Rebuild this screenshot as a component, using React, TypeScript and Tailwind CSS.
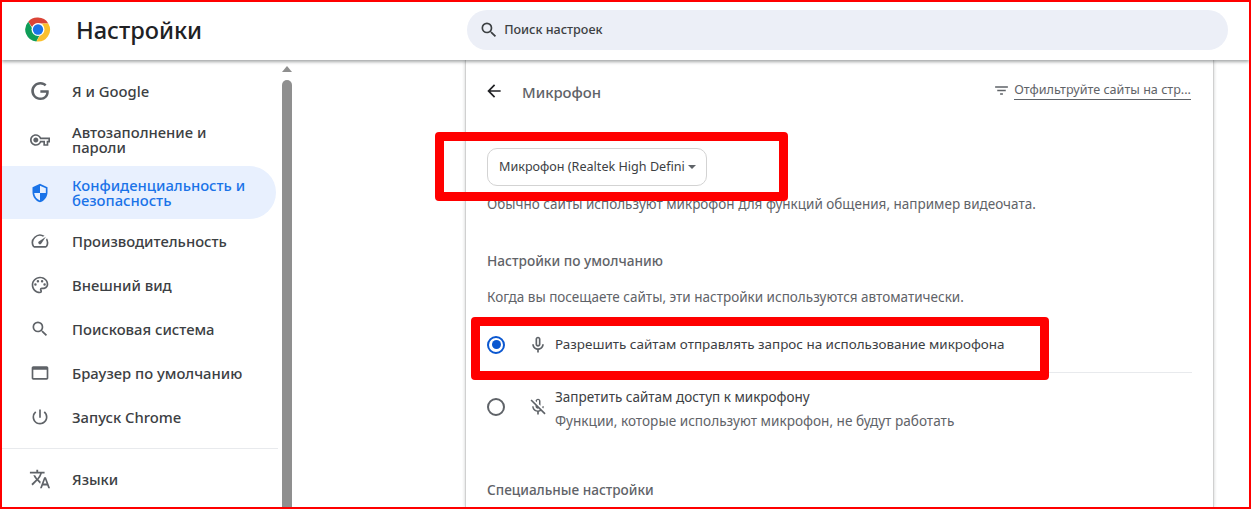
import React from "react";

const paths = {
  google:
    "M12.48 10.92v3.28h7.84c-.24 1.84-.853 3.187-1.787 4.133-1.147 1.147-2.933 2.4-6.053 2.4-4.827 0-8.6-3.893-8.6-8.72s3.773-8.72 8.6-8.72c2.6 0 4.507 1.027 5.907 2.347l2.307-2.307C18.747 1.44 16.133 0 12.48 0 5.867 0 .307 5.387.307 12s5.56 12 12.173 12c3.573 0 6.267-1.173 8.373-3.36 2.16-2.16 2.84-5.213 2.84-7.667 0-.76-.053-1.467-.173-2.053H12.48z",
  key: "M22 19h-6v-4h-2.68c-1.14 2.42-3.6 4-6.32 4-3.86 0-7-3.14-7-7s3.14-7 7-7c2.72 0 5.17 1.58 6.32 4H24v6h-2v4zm-4-2h2v-4h2v-2H11.94l-.23-.67C11.01 8.34 9.11 7 7 7c-2.76 0-5 2.24-5 5s2.24 5 5 5c2.11 0 4.01-1.34 4.71-3.33l.23-.67H18v4zM7 15c-1.65 0-3-1.35-3-3s1.35-3 3-3 3 1.35 3 3-1.35 3-3 3z",
  shield:
    "M12 1L3 5v6c0 5.55 3.84 10.74 9 12 5.16-1.26 9-6.45 9-12V5l-9-4zm0 10.99h7c-.53 4.12-3.28 7.79-7 8.94V12H5V6.3l7-3.11v8.8z",
  speed:
    "M20.38 8.57l-1.23 1.85a8 8 0 0 1-.22 7.58H5.07A8 8 0 0 1 15.58 6.85l1.85-1.23A10 10 0 0 0 3.35 19a2 2 0 0 0 1.72 1h13.85a2 2 0 0 0 1.74-1 10 10 0 0 0-.27-10.44zm-9.79 6.84a2 2 0 0 0 2.83 0l5.66-8.49-8.49 5.66a2 2 0 0 0 0 2.83z",
  palette:
    "M12 22C6.49 22 2 17.51 2 12S6.49 2 12 2s10 4.04 10 9c0 3.31-2.69 6-6 6h-1.77c-.28 0-.5.22-.5.5 0 .12.05.23.13.33.41.47.64 1.06.64 1.67A2.5 2.5 0 0 1 12 22zm0-18c-4.41 0-8 3.59-8 8s3.59 8 8 8c.28 0 .5-.22.5-.5a.54.54 0 0 0-.14-.35c-.41-.46-.63-1.05-.63-1.65a2.5 2.5 0 0 1 2.5-2.5H16c2.21 0 4-1.79 4-4 0-3.86-3.59-7-8-7zM6.5 10a1.5 1.5 0 1 1 0 3 1.5 1.5 0 0 1 0-3zm3-4a1.5 1.5 0 1 1 0 3 1.5 1.5 0 0 1 0-3zm5 0a1.5 1.5 0 1 1 0 3 1.5 1.5 0 0 1 0-3zm3 4a1.5 1.5 0 1 1 0 3 1.5 1.5 0 0 1 0-3z",
  search:
    "M15.5 14h-.79l-.28-.27A6.471 6.471 0 0 0 16 9.5 6.5 6.5 0 1 0 9.5 16c1.61 0 3.09-.59 4.23-1.57l.27.28v.79l5 4.99L20.49 19l-4.99-5zm-6 0C7.01 14 5 11.99 5 9.5S7.01 5 9.5 5 14 7.01 14 9.5 11.99 14 9.5 14z",
  browser:
    "M20 4H4c-1.11 0-2 .9-2 2v12c0 1.1.89 2 2 2h16c1.1 0 2-.9 2-2V6c0-1.1-.89-2-2-2zm0 14H4V8h16v10z",
  power:
    "M13 3h-2v10h2V3zm4.83 2.17l-1.42 1.42A6.92 6.92 0 0 1 19 12c0 3.87-3.13 7-7 7A6.995 6.995 0 0 1 7.58 6.58L6.17 5.17A8.932 8.932 0 0 0 3 12c0 4.97 4.03 9 9 9s9-4.03 9-9c0-2.74-1.23-5.18-3.17-6.83z",
  translate:
    "M12.87 15.07l-2.54-2.51.03-.03A17.52 17.52 0 0 0 14.07 6H17V4h-7V2H8v2H1v1.99h11.17C11.5 7.92 10.44 9.75 9 11.35 8.07 10.32 7.3 9.19 6.69 8h-2c.73 1.63 1.73 3.17 2.98 4.56l-5.09 5.02L4 19l5-5 3.11 3.11.76-2.04zM18.5 10h-2L12 22h2l1.12-3h4.75L21 22h2l-4.5-12zm-2.62 7l1.62-4.33L19.12 17h-3.24z",
  mic: "M12 14c1.66 0 3-1.34 3-3V5c0-1.66-1.34-3-3-3S9 3.34 9 5v6c0 1.66 1.34 3 3 3zm-1-9c0-.55.45-1 1-1s1 .45 1 1v6c0 .55-.45 1-1 1s-1-.45-1-1V5zm6 6c0 2.76-2.24 5-5 5s-5-2.24-5-5H5c0 3.53 2.61 6.43 6 6.92V21h2v-3.08c3.39-.49 6-3.39 6-6.92h-2z",
  micOff:
    "M10.8 4.9c0-.66.54-1.2 1.2-1.2s1.2.54 1.2 1.2l-.01 3.91L15 10.6V5c0-1.66-1.34-3-3-3-1.54 0-2.79 1.16-2.96 2.65l1.76 1.76V4.9zM19 11h-1.7c0 .58-.1 1.13-.27 1.64l1.27 1.27c.44-.88.7-1.87.7-2.91zM4.41 2.86L3 4.27l6 6V11c0 1.66 1.34 3 3 3 .23 0 .44-.03.65-.08l1.66 1.66c-.71.33-1.5.52-2.31.52-2.76 0-5.3-2.1-5.3-5.1H5c0 3.41 2.72 6.23 6 6.72V21h2v-3.28c.91-.13 1.77-.45 2.55-.9l4.2 4.2 1.41-1.41L4.41 2.86z",
  filter: "M10 18h4v-2h-4v2zM3 6v2h18V6H3zm3 7h12v-2H6v2z",
  back: "M20 11H7.83l5.59-5.59L12 4l-8 8 8 8 1.41-1.41L7.83 13H20v-2z",
};

const Icon: React.FC<{ d: string; className?: string }> = ({ d, className }) => (
  <svg viewBox="0 0 24 24" fill="currentColor" className={className}>
    <path d={d} />
  </svg>
);

const ChromeLogo = () => (
  <svg viewBox="0 0 48 48" className="h-[27px] w-[27px]">
    <path fill="#db4437" d="M24 2a22 22 0 0 1 19 11H24a11 11 0 0 0-10.4 7.4L6 9.5A22 22 0 0 1 24 2z" />
    <path fill="#0f9d58" d="M6 9.5l9.5 16.5a11 11 0 0 0 11.9 7.5L21 46A22 22 0 0 1 6 9.5z" />
    <path fill="#fbc02d" d="M43 13a22 22 0 0 1-22 33l9.5-16.5A11 11 0 0 0 31 13h12z" />
    <circle cx="24" cy="24" r="12" fill="#fff" />
    <circle cx="24" cy="24" r="9.5" fill="#1a73e8" />
  </svg>
);

interface NavItem {
  label: string;
  icon: string;
  h: string;
  iconClass: string;
  active?: boolean;
}

const topItems: NavItem[] = [
  { label: "Я и Google", icon: paths.google, h: "h-11", iconClass: "h-[18px] w-[18px]" },
  { label: "Автозаполнение и пароли", icon: paths.key, h: "h-[53px]", iconClass: "h-5 w-5" },
  { label: "Конфиденциальность и безопасность", icon: paths.shield, h: "h-[53px]", iconClass: "h-5 w-5 -scale-x-100", active: true },
  { label: "Производительность", icon: paths.speed, h: "h-11", iconClass: "h-5 w-5" },
  { label: "Внешний вид", icon: paths.palette, h: "h-11", iconClass: "h-5 w-5" },
  { label: "Поисковая система", icon: paths.search, h: "h-11", iconClass: "h-5 w-5" },
  { label: "Браузер по умолчанию", icon: paths.browser, h: "h-11", iconClass: "h-5 w-5" },
  { label: "Запуск Chrome", icon: paths.power, h: "h-11", iconClass: "h-5 w-5" },
];

const NavRow: React.FC<{ item: NavItem }> = ({ item }) => (
  <div
    className={`${item.h} flex items-center rounded-r-[27px] pl-[25px] ${
      item.active ? "bg-[#e8f0fe] text-[#1a73e8]" : "text-[#3c4043]"
    }`}
  >
    <div className={`flex w-[25px] shrink-0 justify-center ${item.active ? "text-[#1a73e8]" : "text-[#5f6368]"}`}>
      <Icon d={item.icon} className={item.iconClass} />
    </div>
    <span className="ml-[20px] max-w-[185px] text-[14.8px] leading-[15px] font-medium">{item.label}</span>
  </div>
);

const Sidebar = () => (
  <div className="flex w-[291px] shrink-0">
    <nav className="w-[274px] shrink-0 pt-[9px]">
      {topItems.map((item) => (
        <NavRow key={item.label} item={item} />
      ))}
      <div className="mt-[9px] mb-[8px] mr-[-2px] border-t border-[#e8eaed]" />
      <NavRow item={{ label: "Языки", icon: paths.translate, h: "h-11", iconClass: "h-[22px] w-[22px]" }} />
    </nav>
    <div className="ml-[6px] flex w-[10px] flex-col items-center pt-[6px]">
      <div className="h-0 w-0 border-x-[5px] border-b-[6px] border-x-transparent border-b-[#8f8f8f]" />
      <div className="mt-[8px] w-full flex-1 rounded-t-[5px] bg-[#8f8f8f]" />
    </div>
  </div>
);

const Radio: React.FC<{ checked?: boolean; className?: string }> = ({ checked, className = "" }) => (
  <div
    className={`flex h-[18px] w-[18px] shrink-0 items-center justify-center rounded-full border-2 ${
      checked ? "border-[#0b57d0]" : "border-[#5f6368]"
    } ${className}`}
  >
    {checked && <div className="h-[9px] w-[9px] rounded-full bg-[#0b57d0]" />}
  </div>
);

const Card = () => (
  <div className="ml-[172px] w-[749px] shrink-0 border-x border-[#d0d0d0] bg-white shadow-[0_0_3px_rgba(60,64,67,0.25)]">
    <div className="flex h-[62px] items-center pr-[22px] pl-[18px]">
      <Icon d={paths.back} className="h-[20px] w-[20px] text-[#202124]" />
      <h2 className="mt-[2px] ml-[18px] text-[14.9px] font-medium text-[#5f6368]">Микрофон</h2>
      <div className="mb-[2px] ml-auto flex items-center text-[#5f6368]">
        <Icon d={paths.filter} className="h-[17px] w-[17px]" />
        <span className="ml-[4px] border-b border-[#5f6368] text-[12.6px] leading-[18px]">Отфильтруйте сайты на стр...</span>
      </div>
    </div>
    <div className="px-[21px] pt-[26px]">
      <div className="flex h-[38px] w-[220px] items-center rounded-[10px] border border-[#d3d3d3] pl-[11px] text-[12.6px] text-[#3c4043]">
        <span>Микрофон (Realtek High Defini</span>
        <div className="ml-[3px] h-0 w-0 border-x-[4px] border-t-[4px] border-x-transparent border-t-[#5f6368]" />
      </div>
      <p className="mt-[9px] text-[13.5px] leading-[18px] text-[#5f6368]">
        Обычно сайты используют микрофон для функций общения, например видеочата.
      </p>
      <h3 className="mt-[39px] text-[13.7px] leading-[18px] font-medium text-[#5f6368]">Настройки по умолчанию</h3>
      <p className="mt-[18px] text-[13.5px] leading-[18px] text-[#5f6368]">
        Когда вы посещаете сайты, эти настройки используются автоматически.
      </p>
      <div className="mt-[11px] flex h-[56px] items-center border-b border-[#e8eaed]">
        <Radio checked />
        <Icon d={paths.mic} className="ml-[23px] h-5 w-5 text-[#5f6368]" />
        <span className="ml-[7px] text-[13.45px] text-[#3c4043]">
          Разрешить сайтам отправлять запрос на использование микрофона
        </span>
      </div>
      <div className="mt-[13px] flex items-center">
        <Radio className="mb-[4px]" />
        <Icon d={paths.micOff} className="mb-[4px] ml-[23px] h-5 w-5 text-[#5f6368]" />
        <div className="ml-[7px] leading-[23px]">
          <div className="text-[13.5px] text-[#3c4043]">Запретить сайтам доступ к микрофону</div>
          <div className="text-[13.6px] text-[#5f6368]">Функции, которые используют микрофон, не будут работать</div>
        </div>
      </div>
      <h3 className="mt-[49px] text-[13.6px] leading-[18px] font-medium text-[#5f6368]">Специальные настройки</h3>
    </div>
  </div>
);

export default function App() {
  return (
    <div
      className="relative box-border flex h-[509px] w-[1251px] flex-col overflow-hidden border-2 border-[#ff0000] bg-white"
      style={{ fontFamily: '"Noto Sans", sans-serif' }}
    >
      <header className="relative z-10 flex h-[58px] shrink-0 items-center bg-white pb-[2px] shadow-[0_2px_3px_rgba(60,64,67,0.45)]">
        <div className="mb-[1px] ml-[23px] flex w-[26px] justify-center">
          <ChromeLogo />
        </div>
        <h1 className="mt-[2px] ml-[25px] text-[23.6px] font-medium text-[#202124]">Настройки</h1>
        <div className="ml-[265px] flex h-10 w-[761px] items-center rounded-[20px] bg-[#eceff7] pl-[12px] text-[#3c4043]">
          <Icon d={paths.search} className="h-[20px] w-[20px]" />
          <span className="ml-[5px] text-[12.6px] font-medium">Поиск настроек</span>
        </div>
      </header>
      <div className="flex min-h-0 flex-1">
        <Sidebar />
        <Card />
      </div>
      {/* red annotation boxes drawn over the page */}
      <div className="absolute top-[130px] left-[433px] h-[69px] w-[353px] rounded-[4px] border-[9px] border-[#ff0000]" />
      <div className="absolute top-[315px] left-[469px] h-[63px] w-[578px] rounded-[4px] border-[9px] border-[#ff0000]" />
    </div>
  );
}
